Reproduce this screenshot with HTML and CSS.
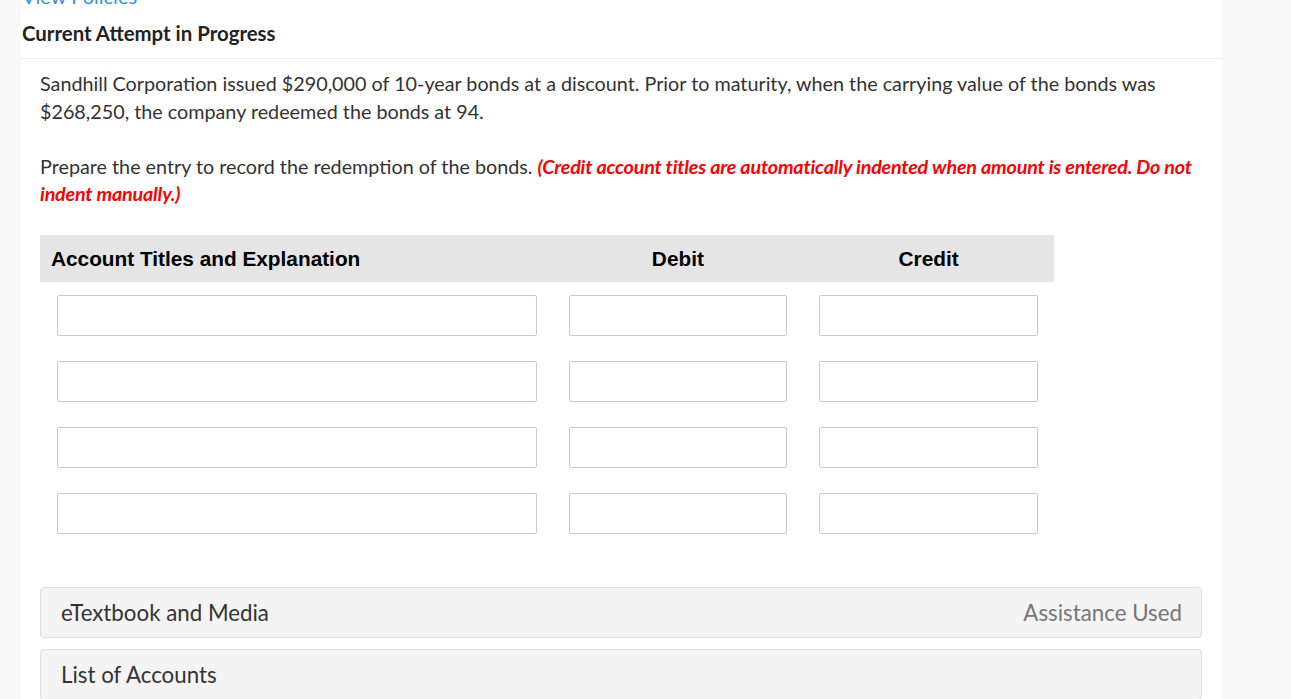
FILE: index.html
```html
<!DOCTYPE html>
<html>
<head>
<meta charset="utf-8">
<link rel="stylesheet" href="styles.css">
</head>
<body>
<div class="page">
  <main class="panel">
    <a class="policies" href="#">View Policies</a>
    <h2 class="attempt">Current Attempt in Progress</h2>
    <div class="content">
      <p class="question">Sandhill Corporation issued $290,000 of 10-year bonds at a discount. Prior to maturity, when the carrying value of the bonds was $268,250, the company redeemed the bonds at 94.</p>
      <p class="prompt">Prepare the entry to record the redemption of the bonds. <em class="note">(Credit account titles are automatically indented when amount is entered. Do not indent manually.)</em></p>
      <table class="journal">
        <thead>
          <tr>
            <th class="c-title">Account Titles and Explanation</th>
            <th class="c-amt">Debit</th>
            <th class="c-amt">Credit</th>
          </tr>
        </thead>
        <tbody>
          <tr><td class="c-title"><input class="fld" type="text"></td><td class="c-amt"><input class="fld" type="text"></td><td class="c-amt"><input class="fld" type="text"></td></tr>
          <tr><td class="c-title"><input class="fld" type="text"></td><td class="c-amt"><input class="fld" type="text"></td><td class="c-amt"><input class="fld" type="text"></td></tr>
          <tr><td class="c-title"><input class="fld" type="text"></td><td class="c-amt"><input class="fld" type="text"></td><td class="c-amt"><input class="fld" type="text"></td></tr>
          <tr><td class="c-title"><input class="fld" type="text"></td><td class="c-amt"><input class="fld" type="text"></td><td class="c-amt"><input class="fld" type="text"></td></tr>
        </tbody>
      </table>
      <div class="acc">
        <span>eTextbook and Media</span>
        <span class="used">Assistance Used</span>
      </div>
      <div class="acc">
        <span>List of Accounts</span>
      </div>
    </div>
  </main>
</div>
</body>
</html>
```
FILE: styles.css
```css
html, body {
  margin: 0;
  padding: 0;
  background: #f8f8f8;
  height: 100%;
  overflow: hidden;
}
body {
  font-family: Lato, "Open Sans", sans-serif;
  color: #333;
}
.page {
  padding-left: 21px;
  width: 1201px;
}
.panel {
  background: #fff;
  margin-top: -14px;
  min-height: 760px;
}
.policies {
  display: block;
  color: #3a8fd9;
  font-size: 20px;
  line-height: 20px;
  padding-left: 1px;
  text-decoration: none;
}
.attempt {
  margin: 0;
  font-size: 20.4px;
  font-weight: 700;
  line-height: 26px;
  padding: 14px 0 12px 1px;
  color: #222;
  border-bottom: 1px solid #ececec;
}
.content {
  padding: 11px 20px 0 19px;
}
.question {
  margin: 0;
  font-size: 19.75px;
  line-height: 28px;
  color: #333;
}
.prompt {
  margin: 27px 0 0;
  font-size: 19.75px;
  line-height: 27px;
  color: #333;
}
.note {
  color: #f00;
  font-weight: 700;
  font-style: italic;
  letter-spacing: -0.2px;
}
.journal {
  margin-top: 28px;
  border-collapse: collapse;
  width: 1014px;
}
.journal th {
  background: #e5e5e5;
  height: 47px;
  padding: 0;
  font-family: "Liberation Sans", Arial, sans-serif;
  font-size: 20.8px;
  font-weight: 700;
  color: #000;
}
.journal th.c-title {
  text-align: left;
  padding-left: 11px;
}
.journal td {
  padding: 12px 16px 13px;
  height: 41px;
}
.journal tbody tr:first-child td {
  padding-top: 13px;
}
.journal td.c-title {
  width: 480px;
  padding-left: 17px;
}
.journal td.c-amt {
  width: 219px;
}
.fld {
  box-sizing: border-box;
  display: block;
  width: 100%;
  height: 41px;
  border: 1px solid #cacaca;
  border-radius: 2px;
  background: #fff;
  margin: 0;
}
.acc {
  display: flex;
  justify-content: space-between;
  align-items: center;
  box-sizing: border-box;
  height: 51px;
  background: #f4f4f4;
  border: 1px solid #ddd;
  border-radius: 4px;
  padding: 0 19px 0 20px;
  font-size: 22.3px;
  color: #333;
  margin-top: 11px;
}
.journal + .acc {
  margin-top: 40px;
}
.used {
  color: #777;
}
```
